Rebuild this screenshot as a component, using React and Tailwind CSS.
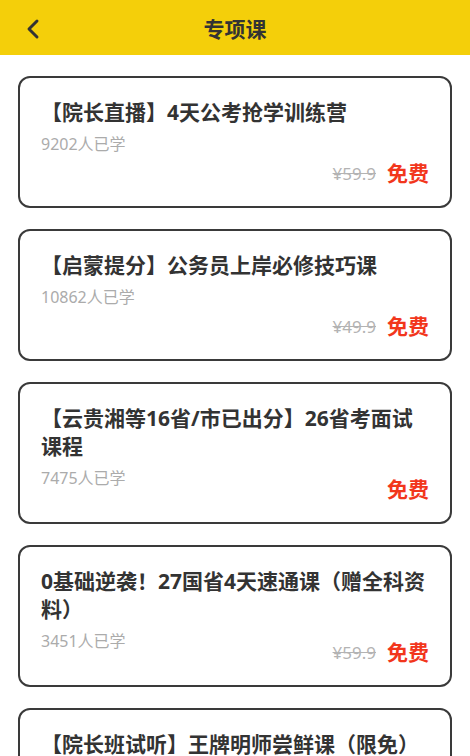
import { ChevronLeft } from "lucide-react";

const courses = [
  { title: "【院长直播】4天公考抢学训练营", count: 9202, price: "¥59.9" },
  { title: "【启蒙提分】公务员上岸必修技巧课", count: 10862, price: "¥49.9" },
  { title: "【云贵湘等16省/市已出分】26省考面试课程", count: 7475, price: null },
  { title: "0基础逆袭！27国省4天速通课（赠全科资料）", count: 3451, price: "¥59.9" },
  { title: "【院长班试听】王牌明师尝鲜课（限免）", count: 2816, price: "¥59.9" },
];

function CourseCard({ course }) {
  return (
    <div className="flex flex-col min-h-[132px] border-2 border-[#3a3a3a] rounded-[12px] bg-white pt-[20px] pb-[18px] px-[21px]">
      <div className="text-[21px] leading-[28px] font-bold text-[#333]">{course.title}</div>
      <div className="mt-[8px] text-[16px] leading-[20px] text-[#ababab]">{course.count}人已学</div>
      <div className="flex-1" />
      <div className="-mt-[12px] flex items-center justify-end h-[28px]">
        {course.price && (
          <span className="text-[17px] text-[#b3b3b3] line-through mr-[11px]">{course.price}</span>
        )}
        <span className="text-[21px] font-bold text-[#f2361c]">免费</span>
      </div>
    </div>
  );
}

export default function App() {
  return (
    <div
      className="w-[470px] h-[756px] overflow-hidden bg-white"
      style={{ fontFamily: '"Noto Sans", "Noto Sans CJK SC", sans-serif' }}
    >
      <div className="relative flex items-center justify-center h-[55px] pt-[4px] bg-[#f4cf0a]">
        <ChevronLeft className="absolute left-[17px] top-[13px] w-[32px] h-[32px] text-[#333]" strokeWidth={2.2} />
        <span className="text-[21px] font-bold text-[#333]">专项课</span>
      </div>
      <div className="flex flex-col gap-[21px] px-[18px] pt-[21px]">
        {courses.map((c) => (
          <CourseCard key={c.title} course={c} />
        ))}
      </div>
    </div>
  );
}
